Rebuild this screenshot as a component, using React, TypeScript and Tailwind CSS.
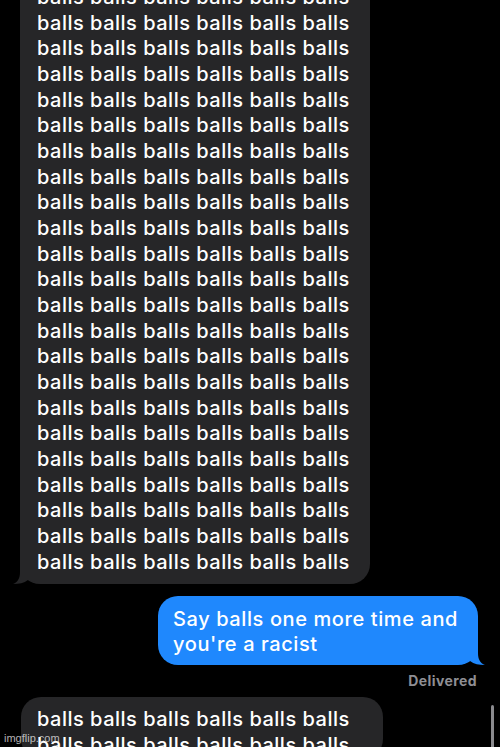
const LINE = "balls balls balls balls balls balls";

function TailLeft({ color }: { color: string }) {
  return (
    <svg
      className="absolute -left-[7px] bottom-0"
      width="22"
      height="20"
      viewBox="0 0 22 20"
      aria-hidden="true"
    >
      <path d="M22 0 H7 V8 C7 14 5 18 0 20 C6 20 11 19 15 16 C17 17 20 18 22 18 Z" fill={color} />
    </svg>
  );
}

function TailRight({ color }: { color: string }) {
  return (
    <svg
      className="absolute -right-[7px] bottom-0"
      width="22"
      height="20"
      viewBox="0 0 22 20"
      aria-hidden="true"
    >
      <path d="M0 0 H15 V8 C15 14 17 18 22 20 C16 20 11 19 7 16 C5 17 2 18 0 18 Z" fill={color} />
    </svg>
  );
}

export default function App() {
  const lines = Array.from({ length: 23 }, (_, i) => i);

  return (
    <div
      className="relative h-[747px] w-[500px] overflow-hidden bg-black text-white"
      style={{ fontFamily: "Inter, 'Noto Sans', sans-serif" }}
    >
      <div className="flex flex-col">
        {/* incoming wall of text */}
        <div className="relative ml-[20px] mt-[-23px] w-[350px] rounded-[20px] bg-[#262628] pb-[9px] pl-[17px] pt-[8px]">
          {lines.map((i) => (
            <p key={i} className="whitespace-nowrap text-[20px] font-medium leading-[25.67px] tracking-[0.5px]">
              {LINE}
            </p>
          ))}
          <TailLeft color="#262628" />
        </div>

        {/* outgoing */}
        <div className="mt-[12px] flex justify-end pr-[22px]">
          <div className="relative w-[320px] rounded-[20px] bg-[#1f88fd] px-[15px] pb-[8px] pt-[11px]">
            <p className="whitespace-nowrap text-[20px] font-medium leading-[25px] tracking-[0.6px]">
              Say balls one more time and
            </p>
            <p className="whitespace-nowrap text-[20px] font-medium leading-[25px] tracking-[0.6px]">
              you're a racist
            </p>
            <TailRight color="#1f88fd" />
          </div>
        </div>

        <div className="mt-[7px] flex justify-end pr-[23px]">
          <span className="text-[14px] font-bold leading-[17px] tracking-[0.4px] text-[#8e8e93]">
            Delivered
          </span>
        </div>

        {/* next incoming, cut off */}
        <div className="ml-[21px] mt-[8px] w-[362px] rounded-[20px] bg-[#262628] pl-[16px] pt-[10px]">
          {[0, 1].map((i) => (
            <p key={i} className="whitespace-nowrap text-[20px] font-medium leading-[25.67px] tracking-[0.5px]">
              {LINE}
            </p>
          ))}
        </div>
      </div>

      {/* scroll indicator */}
      <div className="absolute left-[491px] top-[705px] h-[50px] w-[3px] rounded-full bg-[#8a8a8e]" />

      {/* watermark */}
      <span
        className="absolute bottom-[2px] left-[4px] text-[11px] leading-[14px] text-white/70"
        style={{ fontFamily: "'Liberation Sans', Arial, sans-serif" }}
      >
        imgflip.com
      </span>
    </div>
  );
}
